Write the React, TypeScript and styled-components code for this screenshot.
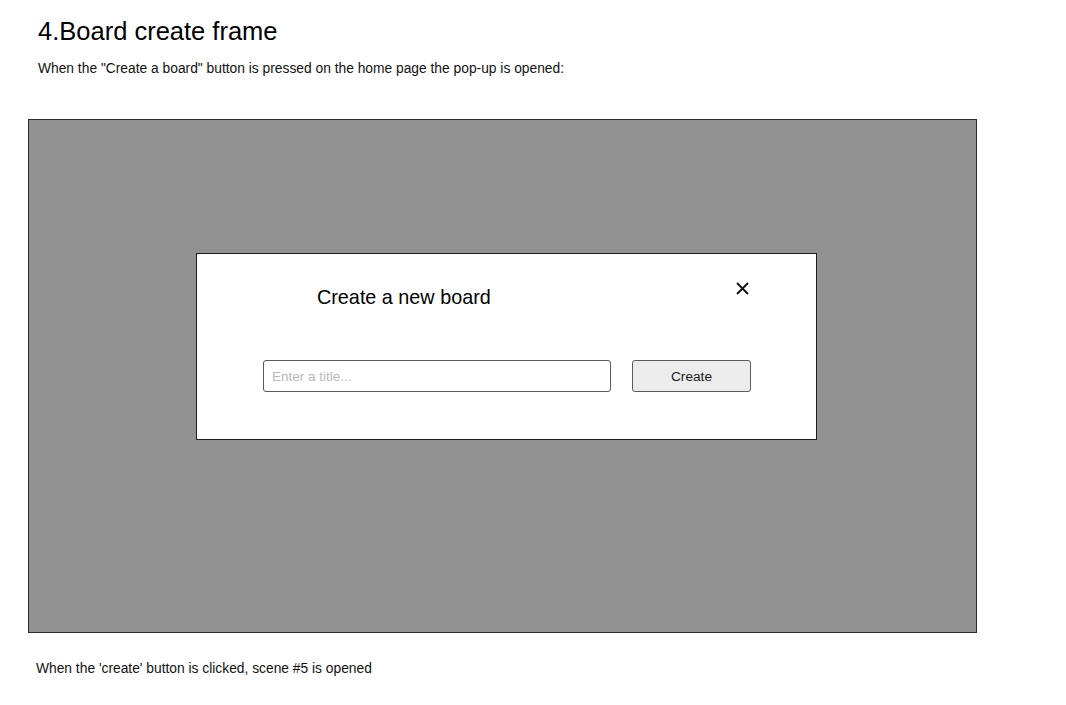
import React from "react";
import styled, { createGlobalStyle } from "styled-components";

const Global = createGlobalStyle`
  html, body { margin: 0; padding: 0; background: #ffffff; }
  body { font-family: "Liberation Sans", Arial, sans-serif; color: #000; }
`;

const Page = styled.div`
  padding: 16px 0 0 38px;
  width: 1066px;
  box-sizing: border-box;
`;

const Heading = styled.h1`
  margin: 0;
  font-size: 25.5px;
  line-height: 30px;
  font-weight: 400;
  color: #000;
`;

const Para = styled.p<{ $top: number; $indent?: number }>`
  margin: ${(p) => p.$top}px 0 0 ${(p) => p.$indent ?? 0}px;
  font-size: 13.8px;
  line-height: 16px;
  color: #111;
`;

const Frame = styled.div`
  margin: 42px 0 0 -10px;
  width: 949px;
  height: 514px;
  box-sizing: border-box;
  background: #929292;
  border: 1px solid #2a2a2a;
  padding: 133px 0 0 167px;
`;

const Modal = styled.div`
  width: 621px;
  height: 187px;
  box-sizing: border-box;
  background: #ffffff;
  border: 1px solid #1e1e1e;
  display: flex;
  flex-direction: column;
  padding-top: 31px;
`;

const HeaderRow = styled.div`
  display: flex;
  justify-content: space-between;
  align-items: flex-start;
  padding: 0 67px 0 120px;
`;

const Title = styled.h2`
  margin: 0;
  font-size: 19.8px;
  line-height: 24px;
  font-weight: 400;
  color: #000;
`;

const CloseButton = styled.button`
  margin-top: -3px;
  padding: 0;
  border: none;
  background: none;
  width: 13px;
  height: 13px;
  display: flex;
  cursor: pointer;
`;

const FormRow = styled.div`
  display: flex;
  gap: 21px;
  margin-top: 51px;
  padding-left: 66px;
`;

const TitleInput = styled.input`
  width: 348px;
  height: 32px;
  box-sizing: border-box;
  border: 1px solid #5a5a5a;
  border-radius: 3px;
  padding: 0 8px;
  font-family: "Liberation Sans", Arial, sans-serif;
  font-size: 13.5px;
  color: #222;
  outline: none;
  &::placeholder { color: #b8b8b8; }
`;

const CreateButton = styled.button`
  width: 119px;
  height: 32px;
  box-sizing: border-box;
  border: 1px solid #5a5a5a;
  border-radius: 3px;
  background: #ececec;
  font-family: "Liberation Sans", Arial, sans-serif;
  font-size: 13.7px;
  color: #1a1a1a;
  padding: 0;
  cursor: pointer;
`;

const CloseIcon = () => (
  <svg width="13" height="13" viewBox="0 0 13 13">
    <path d="M1 1 L12 12 M12 1 L1 12" stroke="#111" strokeWidth="1.9" fill="none" />
  </svg>
);

export default function App() {
  return (
    <>
      <Global />
      <Page>
        <Heading>4.Board create frame</Heading>
        <Para $top={15}>
          When the "Create a board" button is pressed on the home page the pop-up is opened:
        </Para>
        <Frame>
          <Modal>
            <HeaderRow>
              <Title>Create a new board</Title>
              <CloseButton aria-label="Close">
                <CloseIcon />
              </CloseButton>
            </HeaderRow>
            <FormRow>
              <TitleInput placeholder="Enter a title..." />
              <CreateButton>Create</CreateButton>
            </FormRow>
          </Modal>
        </Frame>
        <Para $top={28} $indent={-2}>
          When the 'create' button is clicked, scene #5 is opened
        </Para>
      </Page>
    </>
  );
}
